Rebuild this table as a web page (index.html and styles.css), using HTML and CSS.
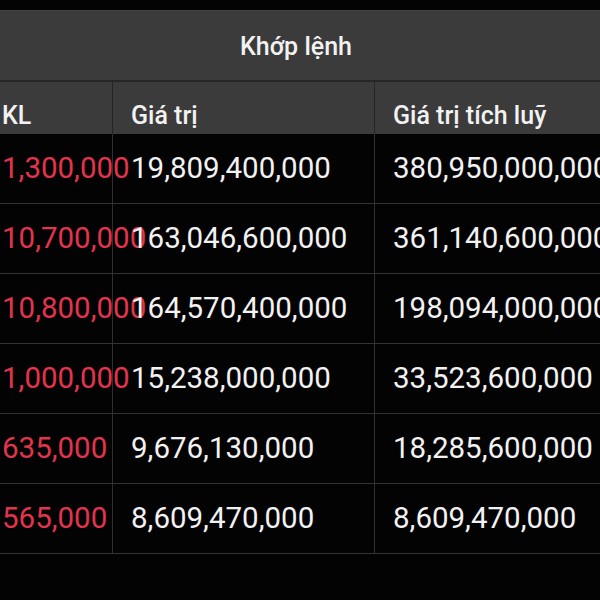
FILE: index.html
```html
<!DOCTYPE html>
<html lang="vi">
<head>
<meta charset="utf-8">
<link rel="stylesheet" href="styles.css">
</head>
<body>
<div class="board">
  <div class="title">Khớp lệnh</div>
  <div class="grid head">
    <div class="cell c1">KL</div>
    <div class="cell c2">Giá trị</div>
    <div class="cell c3">Giá trị tích luỹ</div>
  </div>
  <div class="grid row">
    <div class="cell c1 red">1,300,000</div>
    <div class="cell c2">19,809,400,000</div>
    <div class="cell c3">380,950,000,000</div>
  </div>
  <div class="grid row">
    <div class="cell c1 red">10,700,000</div>
    <div class="cell c2">163,046,600,000</div>
    <div class="cell c3">361,140,600,000</div>
  </div>
  <div class="grid row">
    <div class="cell c1 red">10,800,000</div>
    <div class="cell c2">164,570,400,000</div>
    <div class="cell c3">198,094,000,000</div>
  </div>
  <div class="grid row">
    <div class="cell c1 red">1,000,000</div>
    <div class="cell c2">15,238,000,000</div>
    <div class="cell c3">33,523,600,000</div>
  </div>
  <div class="grid row">
    <div class="cell c1 red">635,000</div>
    <div class="cell c2">9,676,130,000</div>
    <div class="cell c3">18,285,600,000</div>
  </div>
  <div class="grid row">
    <div class="cell c1 red">565,000</div>
    <div class="cell c2">8,609,470,000</div>
    <div class="cell c3">8,609,470,000</div>
  </div>
</div>
</body>
</html>
```

FILE: styles.css
```css
html, body {
  margin: 0;
  padding: 0;
  background: #030303;
  width: 600px;
  height: 600px;
  overflow: hidden;
}
.board {
  padding-top: 10px;
  font-family: Roboto, "Liberation Sans", sans-serif;
  color: #f2f2f2;
}
.title {
  height: 70px;
  background: #3b3b3b;
  border-top: 1px solid #444;
  box-sizing: border-box;
  display: flex;
  align-items: center;
  justify-content: center;
  font-size: 25px;
  font-weight: 500;
  padding-right: 8px;
  padding-top: 2px;
}
.grid {
  display: grid;
  grid-template-columns: 113px 262px 1fr;
  white-space: nowrap;
}
.head {
  background: #3b3b3b;
  border-top: 2px solid #262626;
  height: 54px;
  box-sizing: border-box;
}
.head .cell {
  font-size: 25px;
  font-weight: 500;
  padding-top: 19px;
  border-right-color: #242424;
}
.row {
  height: 70px;
  box-sizing: border-box;
  border-bottom: 1px solid #333;
}
.row .cell {
  display: flex;
  align-items: center;
  font-size: 29.5px;
  padding-bottom: 2px;
}
.cell {
  box-sizing: border-box;
  overflow: visible;
  border-right: 1px solid #303030;
}
.c1 {
  padding-left: 2px;
}
.c2, .c3 {
  padding-left: 18px;
}
.c3 {
  border-right: none;
}
.red {
  color: #e3344d;
}
```
